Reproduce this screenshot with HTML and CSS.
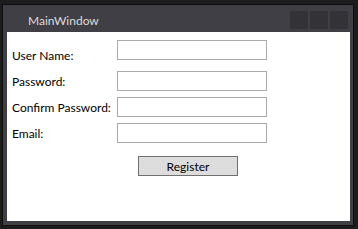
FILE: index.html
```html
<!DOCTYPE html>
<html>
<head>
<meta charset="utf-8">
<link rel="stylesheet" href="styles.css">
</head>
<body>
<div class="window">
  <div class="titlebar">
    <span class="title">MainWindow</span>
    <div class="caption-buttons">
      <span class="cbtn"></span>
      <span class="cbtn"></span>
      <span class="cbtn"></span>
    </div>
  </div>
  <div class="client">
    <div class="row row-first">
      <label class="label label-first">User Name:</label>
      <span class="textbox"></span>
    </div>
    <div class="row">
      <label class="label">Password:</label>
      <span class="textbox"></span>
    </div>
    <div class="row">
      <label class="label">Confirm Password:</label>
      <span class="textbox"></span>
    </div>
    <div class="row">
      <label class="label">Email:</label>
      <span class="textbox"></span>
    </div>
    <div class="button-row">
      <button class="button">Register</button>
    </div>
  </div>
</div>
</body>
</html>
```
FILE: styles.css
```css
html, body {
  margin: 0;
  padding: 0;
  background: #1c1c1c;
  width: 358px;
  height: 229px;
  overflow: hidden;
}
body {
  padding: 4px 0 0 2px;
  box-sizing: border-box;
  font-family: Lato, "Noto Sans", sans-serif;
  font-size: 12px;
}
.window {
  width: 352px;
  height: 222px;
  box-sizing: border-box;
  border: 1px solid #0e0e0e;
  background: #403f45;
  display: flex;
  flex-direction: column;
}
.titlebar {
  height: 27px;
  display: flex;
  align-items: flex-start;
  justify-content: space-between;
}
.title {
  color: #dcdcdc;
  padding-left: 25px;
  line-height: 32px;
  white-space: nowrap;
}
.caption-buttons {
  display: flex;
  gap: 2px;
  margin-top: 6px;
  margin-right: 5px;
}
.cbtn {
  width: 18px;
  height: 18px;
  background: #333237;
}
.client {
  margin: 0 3px 4px 4px;
  height: 189px;
  background: #ffffff;
  padding: 8px 0 0 5px;
  box-sizing: border-box;
  display: flex;
  flex-direction: column;
}
.row {
  display: flex;
  align-items: flex-start;
  margin-bottom: 6px;
}
.row-first {
  margin-bottom: 11px;
}
.label {
  width: 105px;
  flex: none;
  height: 20px;
  line-height: 21px;
  color: #000;
  white-space: nowrap;
}
.label-first {
  line-height: 31px;
}
.textbox {
  width: 150px;
  height: 20px;
  box-sizing: border-box;
  border: 1px solid #ababab;
  background: #fff;
}
.button-row {
  margin-top: 7px;
  padding-left: 126px;
}
.button {
  width: 100px;
  height: 20px;
  box-sizing: border-box;
  border: 1px solid #707070;
  background: #dddddd;
  font-family: inherit;
  font-size: 12px;
  color: #000;
  padding: 0;
  line-height: 17px;
}
```
